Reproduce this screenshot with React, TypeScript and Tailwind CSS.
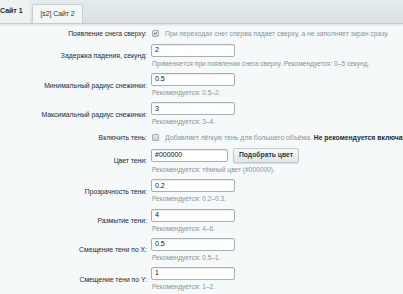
import React from 'react';

type Row =
  | { kind: 'check'; label: string; checked: boolean; text: React.ReactNode }
  | { kind: 'input'; label: string; value: string; hint: string; button?: string };

const rows: Row[] = [
  {
    kind: 'check',
    label: 'Появление снега сверху:',
    checked: true,
    text: 'При переходах снег сперва падает сверху, а не заполняет экран сразу.',
  },
  {
    kind: 'input',
    label: 'Задержка падения, секунд:',
    value: '2',
    hint: 'Применяется при появлении снега сверху. Рекомендуется: 0–5 секунд.',
  },
  { kind: 'input', label: 'Минимальный радиус снежинки:', value: '0.5', hint: 'Рекомендуется: 0.5–2.' },
  { kind: 'input', label: 'Максимальный радиус снежинки:', value: '3', hint: 'Рекомендуется: 3–4.' },
  {
    kind: 'check',
    label: 'Включить тень:',
    checked: false,
    text: (
      <>
        Добавляет лёгкую тень для большего объёма.{' '}
        <b className="font-bold text-[#1f2a2d]">Не рекомендуется включать на слабых устройствах.</b>
      </>
    ),
  },
  {
    kind: 'input',
    label: 'Цвет тени:',
    value: '#000000',
    hint: 'Рекомендуется: тёмный цвет (#000000).',
    button: 'Подобрать цвет',
  },
  { kind: 'input', label: 'Прозрачность тени:', value: '0.2', hint: 'Рекомендуется: 0.2–0.3.' },
  { kind: 'input', label: 'Размытие тени:', value: '4', hint: 'Рекомендуется: 4–6.' },
  { kind: 'input', label: 'Смещение тени по X:', value: '0.5', hint: 'Рекомендуется: 0.5–1.' },
  { kind: 'input', label: 'Смещение тени по Y:', value: '1', hint: 'Рекомендуется: 1–2.' },
];

function Checkbox({ checked }: { checked: boolean }) {
  return (
    <span className="flex h-[7px] w-[7px] shrink-0 items-center justify-center rounded-[1px] border border-[#a9b2b5] bg-gradient-to-b from-[#e4e9ea] to-[#c9d0d2]">
      {checked && (
        <svg viewBox="0 0 10 10" className="h-[6px] w-[6px]">
          <path d="M2 5.2 4.2 7.4 8.2 2.6" fill="none" stroke="#5d6a6e" strokeWidth="1.8" />
        </svg>
      )}
    </span>
  );
}

function SettingRow({ row }: { row: Row }) {
  return (
    <div className="grid min-h-[11px] grid-cols-[147px_1fr] items-center gap-x-[4px]">
      <div className="text-right text-[6.8px] leading-[9px] whitespace-nowrap text-[#1f2a2d]">{row.label}</div>
      {row.kind === 'check' ? (
        <div className="flex items-center gap-[6px] pl-[1px]">
          <Checkbox checked={row.checked} />
          <span className="text-[6.8px] leading-[9px] whitespace-nowrap text-[#8a9498]">{row.text}</span>
        </div>
      ) : (
        <div className="flex flex-col">
          <div className="flex items-center gap-[5px]">
            <div
              className={`flex h-[13px] items-center rounded-[2px] border border-[#a7b0b3] bg-white pl-[3px] text-[7px] text-[#111] shadow-[inset_0_1px_1px_rgba(0,0,0,0.08)] ${
                row.button ? 'w-[77px]' : 'w-[84px]'
              }`}
            >
              {row.value}
            </div>
            {row.button && (
              <div className="flex h-[15px] w-[66px] items-center justify-center rounded-[2px] border border-[#c2cacd] bg-gradient-to-b from-[#f8fafa] to-[#dfe6e8] text-[6.8px] font-bold text-[#2c3a3e] shadow-[0_1px_1px_rgba(0,0,0,0.12)]">
                {row.button}
              </div>
            )}
          </div>
          <div className="mt-[2px] pl-[1px] text-[6.6px] leading-[9px] whitespace-nowrap text-[#8a9498]">{row.hint}</div>
        </div>
      )}
    </div>
  );
}

export default function App() {
  return (
    <div className="h-[294px] w-[403px] overflow-hidden bg-[#f5f9f9] font-['Liberation_Sans',Arial,sans-serif]">
      <div className="flex h-[24px] items-end border-b border-[#c3ccce] bg-gradient-to-b from-[#e6ecee] to-[#d8e0e2] shadow-[0_1px_2px_rgba(0,0,0,0.12)]">
        <div className="flex h-full w-[30px] items-center bg-[#edf2f3] text-[7px] font-bold text-[#1f2a2d]">
          Сайт 1
        </div>
        <div className="ml-[2px] flex h-[19px] w-[51px] items-center justify-center rounded-t-[2px] border border-b-0 border-[#c8d0d3] bg-[#f3f6f7] text-[6.8px] text-[#2b3639]">
          [s2] Сайт 2
        </div>
      </div>
      <div className="flex flex-col gap-[5.3px] pt-[3.5px]">
        {rows.map((row) => (
          <SettingRow key={row.label} row={row} />
        ))}
      </div>
    </div>
  );
}
